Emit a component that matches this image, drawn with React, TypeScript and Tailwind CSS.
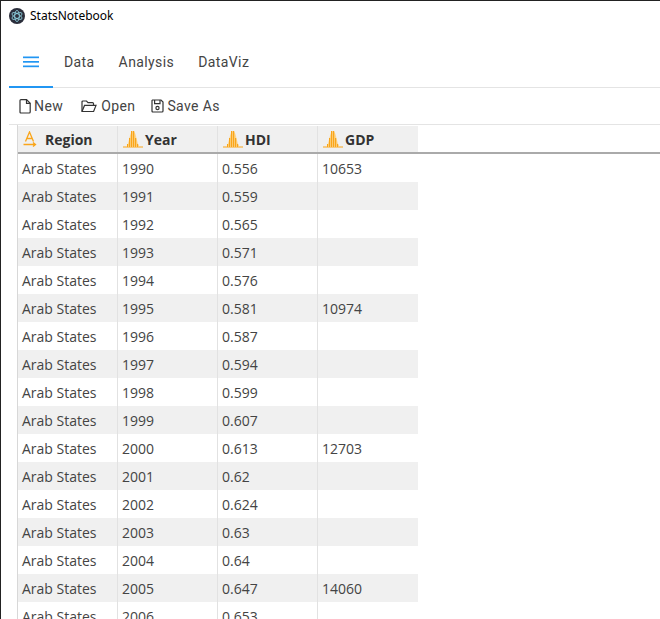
import React from "react";

const rows: [string, string, string][] = [
  ["1990", "0.556", "10653"], ["1991", "0.559", ""], ["1992", "0.565", ""], ["1993", "0.571", ""],
  ["1994", "0.576", ""], ["1995", "0.581", "10974"], ["1996", "0.587", ""], ["1997", "0.594", ""],
  ["1998", "0.599", ""], ["1999", "0.607", ""], ["2000", "0.613", "12703"], ["2001", "0.62", ""],
  ["2002", "0.624", ""], ["2003", "0.63", ""], ["2004", "0.64", ""], ["2005", "0.647", "14060"],
  ["2006", "0.653", ""],
];

function Logo() {
  return (
    <svg width="16" height="16" viewBox="0 0 16 16" fill="none">
      <circle cx="8" cy="8" r="8" fill="#2b2e3b" />
      <g stroke="#9feaf9" strokeWidth="0.7" fill="none">
        <ellipse cx="8" cy="8" rx="5.6" ry="2.3" transform="rotate(30 8 8)" />
        <ellipse cx="8" cy="8" rx="5.6" ry="2.3" transform="rotate(90 8 8)" />
        <ellipse cx="8" cy="8" rx="5.6" ry="2.3" transform="rotate(150 8 8)" />
      </g>
    </svg>
  );
}

function AIcon() {
  return (
    <svg width="14" height="16" viewBox="0 0 14 16" fill="none" stroke="#f9a51a" strokeWidth="1.3">
      <path d="M2.5 10.5 L6.5 1 L10.5 10.5 M4 7.5 H9" />
      <path d="M0.5 13.5 H12 M10 11.5 L12.5 13.5 L10 15.5" />
    </svg>
  );
}

function BellIcon() {
  const xs = [6, 8, 10, 12, 14, 16];
  const hs = [3, 9, 16, 16, 9, 3];
  return (
    <svg width="20" height="18" viewBox="0 0 20 18" fill="none">
      <path d="M0 17 H20" stroke="#f9a51a" strokeWidth="1" />
      <path d="M3 17 C6 16 6.5 1 10 1 C13.5 1 14 16 17 17 Z" fill="#fdd58a" />
      {xs.map((x, i) => (
        <rect key={x} x={x - 2.2 + 0.2} y={17 - hs[i]} width="1.2" height={hs[i]} fill="#f9a51a" />
      ))}
    </svg>
  );
}

function NewIcon() {
  return (
    <svg width="12" height="15" viewBox="0 0 12 15" fill="none" stroke="#333" strokeWidth="1.2">
      <path d="M1 1.5 Q1 0.6 2 0.6 H7.5 L11.2 4.3 V13 Q11.2 14 10.2 14 H2 Q1 14 1 13 Z" />
      <path d="M7.5 0.6 V4.3 H11.2" />
    </svg>
  );
}

function OpenIcon() {
  return (
    <svg width="16" height="13" viewBox="0 0 16 13" fill="none" stroke="#333" strokeWidth="1.2">
      <path d="M1 11 V2 Q1 1 2 1 H5.5 L7 2.6 H11.5 Q12.5 2.6 12.5 3.6 V5" />
      <path d="M1 11.5 L3.5 5.4 H15 L12.6 11.5 Z" />
    </svg>
  );
}

function SaveIcon() {
  return (
    <svg width="13" height="14" viewBox="0 0 13 14" fill="none" stroke="#333" strokeWidth="1.2">
      <path d="M1.5 1 H10 L12 3 V12 Q12 13 11 13 H2 Q1 13 1 12 V1.5 Z" />
      <path d="M3.6 1 V4.6 H9 V1" />
      <circle cx="6.5" cy="9" r="1.6" />
    </svg>
  );
}

function Head({ label, icon }: { label: string; icon: React.ReactNode }) {
  return (
    <div className="flex w-[100px] items-center border-r border-[#e2e2e2] pl-[5px] text-[14px] font-bold text-[#333]">
      <span className="flex w-[21px] shrink-0 items-center">{icon}</span>
      <span className="ml-[1px]">{label}</span>
    </div>
  );
}

function Cell({ children }: { children?: React.ReactNode }) {
  return (
    <div className="flex w-[100px] items-center border-r border-[#e2e2e2] pl-[4px] last:border-r-0">
      {children}
    </div>
  );
}

export default function App() {
  return (
    <div className="h-[619px] w-[660px] overflow-hidden border-l border-t border-[#222] bg-white font-['Open_Sans','Noto_Sans',sans-serif]">
      <div className="flex h-[29px] items-center gap-[5px] pl-[8px] font-['Noto_Sans',sans-serif] text-[12px] text-black">
        <Logo />
        <span>StatsNotebook</span>
      </div>
      <div className="ml-[8px] mt-[8px] flex h-[50px] border-b border-[#e4e4e4] font-['Roboto',sans-serif] text-[14px] tracking-[0.4px] text-[#444]">
        <div className="flex h-[50px] w-[44px] items-center justify-center border-b-2 border-[#2196f3]">
          <svg width="16" height="12" viewBox="0 0 16 12" fill="#2196f3">
            <rect y="0.5" width="16" height="1.7" />
            <rect y="5" width="16" height="1.7" />
            <rect y="9.5" width="16" height="1.7" />
          </svg>
        </div>
        <div className="ml-[11px] flex items-center gap-[24px]">
          <span>Data</span>
          <span>Analysis</span>
          <span>DataViz</span>
        </div>
      </div>
      <div className="ml-[8px] flex h-[37px] items-center border-b border-[#e4e4e4] pl-[10px] font-['Roboto',sans-serif] text-[14px] tracking-[0.4px] text-[#444]">
        <span className="flex items-center gap-[3px]"><NewIcon />New</span>
        <span className="ml-[18px] flex items-center gap-[4px]"><OpenIcon />Open</span>
        <span className="ml-[16px] flex items-center gap-[3px]"><SaveIcon />Save As</span>
      </div>
      <div className="ml-[16px] border-l border-[#d8d8d8] text-[14px] text-[#444]">
        <div className="h-[1px] bg-white" />
        <div className="flex h-[26px] w-[400px] bg-[#f0f0f0]">
          <Head label="Region" icon={<AIcon />} />
          <Head label="Year" icon={<BellIcon />} />
          <Head label="HDI" icon={<BellIcon />} />
          <div className="flex w-[100px] items-center pl-[5px] text-[14px] font-bold text-[#333]">
            <span className="flex w-[21px] shrink-0 items-center"><BellIcon /></span>
            <span className="ml-[1px]">GDP</span>
          </div>
        </div>
        <div className="h-[2px] bg-[#aaaaaa]" />
        {rows.map((r, i) => (
          <div key={r[0]} className={`flex h-[28px] w-[400px] ${i % 2 ? "bg-[#f0f0f0]" : "bg-white"}`}>
            <Cell>Arab States</Cell>
            <Cell>{r[0]}</Cell>
            <Cell>{r[1]}</Cell>
            <Cell>{r[2]}</Cell>
          </div>
        ))}
      </div>
    </div>
  );
}
